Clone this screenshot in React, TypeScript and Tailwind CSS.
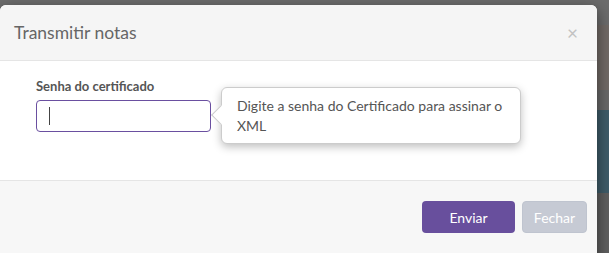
import React from "react";

export default function App() {
  return (
    <div
      className="flex h-[253px] w-[609px] overflow-hidden bg-[#6c6c6c] pt-[5px]"
      style={{ fontFamily: "Lato, 'Open Sans', sans-serif" }}
    >
      <div className="relative z-10 flex h-[270px] w-[597px] shrink-0 flex-col rounded-t-[6px] bg-white shadow-[0_5px_15px_rgba(0,0,0,0.5)]">
        <div className="flex h-[56px] items-center justify-between rounded-t-[6px] border-b border-[#e5e5e5] bg-[#f5f5f5] pl-[14px] pr-[19px]">
          <h4 className="text-[17.5px] leading-none text-[#666]">Transmitir notas</h4>
          <span className="text-[19px] leading-none text-[#c2c2c2]">×</span>
        </div>
        <div className="flex h-[119px] gap-[10px] pl-[36px] pt-[18px]">
          <div className="flex flex-col">
            <label className="text-[13px] font-bold leading-[14px] text-[#555]">Senha do certificado</label>
            <div className="mt-[7px] flex h-[32px] w-[175px] items-center rounded-[4px] border border-[#6a4fa0] pl-[12px]">
              <span className="h-[18px] w-px bg-[#444]" />
            </div>
          </div>
          <div className="relative mt-[8px] h-[57px] w-[300px] rounded-[6px] border border-[#ccc] bg-white px-[15px] pt-[8px] text-[14px] leading-[20px] text-[#555] shadow-[0_3px_8px_rgba(0,0,0,0.25)]">
            <span className="absolute left-[-8px] top-[20px] h-[14px] w-[14px] rotate-45 border-b border-l border-[#ccc] bg-white" />
            <p className="relative">Digite a senha do Certificado para assinar o XML</p>
          </div>
        </div>
        <div className="flex flex-1 justify-end gap-[7px] border-t border-[#e5e5e5] bg-[#f7f7f7] pr-[10px] pt-[20px]">
          <button className="h-[32px] w-[93px] rounded-[4px] bg-[#684f9d] text-[14px] text-white">Enviar</button>
          <button className="h-[32px] w-[65px] rounded-[4px] border border-[#bfc4cf] bg-[#c6cad4] text-[14px] text-white">Fechar</button>
        </div>
      </div>
      <div className="flex flex-1 flex-col">
        <div className="h-[20px] bg-[#6c6c6c]" />
        <div className="h-[65px] bg-[#716a66]" />
        <div className="h-[20px] bg-[#686868]" />
        <div className="h-[83px] bg-[#3f5c69]" />
        <div className="flex-1 bg-[#5f5f5f]" />
      </div>
    </div>
  );
}
